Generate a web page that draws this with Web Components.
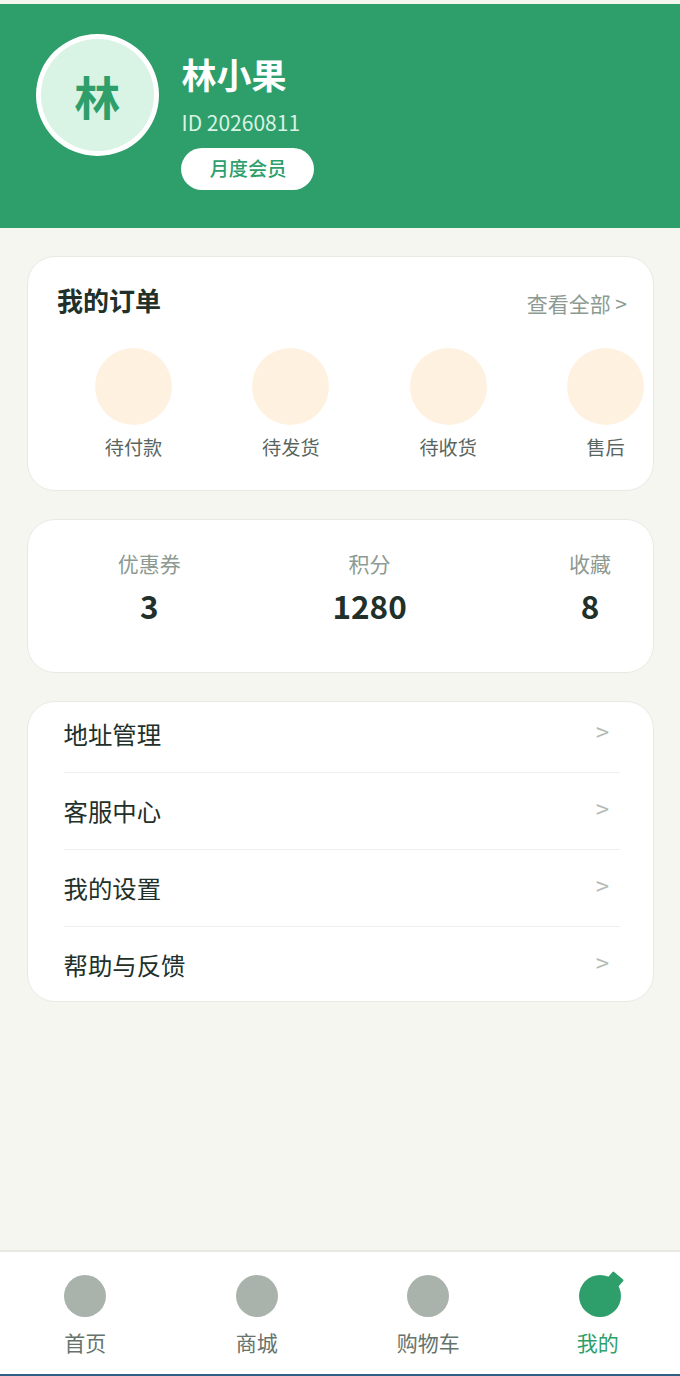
<!DOCTYPE html>
<html lang="zh-CN">
<head>
<meta charset="utf-8">
<title>我的</title>
<style>
    html, body { margin: 0; height: 100%; }
    body {
        background: #f6f6f1;
        font-family: "Noto Sans CJK SC", "Noto Sans", sans-serif;
        overflow: hidden;
    }
</style>
</head>
<body>
<profile-page>
    <profile-header name="林小果" uid="ID 20260811" badge="月度会员" avatar="林"></profile-header>
    <div slot="main">
        <order-card></order-card>
        <stats-card></stats-card>
        <menu-card></menu-card>
    </div>
    <tab-bar slot="tabs"></tab-bar>
</profile-page>

<script>
class ProfilePage extends HTMLElement {
    constructor() {
        super();
        this.attachShadow({ mode: "open" });
        this.shadowRoot.innerHTML = `
            <style>
                :host {
                    display: flex;
                    flex-direction: column;
                    height: 1376px;
                    padding-top: 4px;
                    box-sizing: border-box;
                }
                ::slotted([slot="main"]) {
                    display: flex;
                    flex-direction: column;
                    gap: 28px;
                    padding: 28px 26px 0 27px;
                    flex: 1;
                }
            </style>
            <slot></slot>
            <slot name="main"></slot>
            <slot name="tabs"></slot>
        `;
    }
}

class ProfileHeader extends HTMLElement {
    constructor() {
        super();
        this.attachShadow({ mode: "open" });
    }

    connectedCallback() {
        const a = n => this.getAttribute(n);
        this.shadowRoot.innerHTML = `
            <style>
                :host {
                    display: flex;
                    align-items: flex-start;
                    gap: 23px;
                    height: 224px;
                    box-sizing: border-box;
                    padding: 30px 36px 0;
                    background: #2e9f6b;
                }
                .avatar {
                    width: 122.5px;
                    height: 122px;
                    box-sizing: border-box;
                    border: 5px solid #fff;
                    border-radius: 50%;
                    background: #d9f3e4;
                    color: #2e9f6b;
                    font-size: 46px;
                    font-weight: 700;
                    display: flex;
                    align-items: center;
                    justify-content: center;
                }
                .info { display: flex; flex-direction: column; align-items: flex-start; }
                .name {
                    color: #fff;
                    font-size: 35px;
                    font-weight: 700;
                    line-height: 50px;
                    margin-top: 15px;
                }
                .uid {
                    color: #d9f3e4;
                    font-size: 21px;
                    line-height: 30px;
                    margin-top: 8px;
                }
                .badge {
                    margin-top: 11px;
                    margin-left: -1px;
                    width: 133px;
                    height: 42px;
                    border-radius: 21px;
                    background: #fff;
                    color: #2e9f6b;
                    font-size: 19.2px;
                    font-weight: 500;
                    line-height: 40px;
                    padding: 0 0 2px 2px;
                    box-sizing: border-box;
                    text-align: center;
                }
            </style>
            <div class="avatar">${a("avatar")}</div>
            <div class="info">
                <div class="name">${a("name")}</div>
                <div class="uid">${a("uid")}</div>
                <div class="badge">${a("badge")}</div>
            </div>
        `;
    }
}

const cardStyle = `
    :host {
        display: block;
        box-sizing: border-box;
        background: #fff;
        border: 1px solid #e9e9e4;
        border-radius: 28px;
    }
`;

class OrderCard extends HTMLElement {
    constructor() {
        super();
        this.attachShadow({ mode: "open" });
        const items = ["待付款", "待发货", "待收货", "售后"];
        this.shadowRoot.innerHTML = `
            <style>
                ${cardStyle}
                :host { height: 235px; padding: 24px 26px 0 29px; }
                .head { display: flex; justify-content: space-between; align-items: flex-start; height: 37px; }
                .title { font-size: 26px; font-weight: 700; line-height: 37px; color: #22302a; }
                .all { font-size: 21px; line-height: 30px; margin-top: 7px; color: #8d9a92; }
                .list {
                    display: grid;
                    grid-template-columns: repeat(4, 77px);
                    justify-content: space-between;
                    margin: 30px -17px 0 38px;
                }
                .item { display: flex; flex-direction: column; align-items: center; gap: 8px; }
                .dot { width: 77px; height: 77px; border-radius: 50%; background: #fff1e0; }
                .label { font-size: 19.2px; line-height: 28px; color: #59665f; white-space: nowrap; }
            </style>
            <div class="head">
                <div class="title">我的订单</div>
                <div class="all">查看全部 &gt;</div>
            </div>
            <div class="list">
                ${items.map(t => `<div class="item"><div class="dot"></div><div class="label">${t}</div></div>`).join("")}
            </div>
        `;
    }
}

class StatsCard extends HTMLElement {
    constructor() {
        super();
        this.attachShadow({ mode: "open" });
        const stats = [["优惠券", "3"], ["积分", "1280"], ["收藏", "8"]];
        this.shadowRoot.innerHTML = `
            <style>
                ${cardStyle}
                :host {
                    height: 154px;
                    padding: 28px 0 0 11px;
                    display: grid;
                    grid-template-columns: repeat(3, 220.4px);
                    align-items: start;
                }
                .stat { display: flex; flex-direction: column; align-items: center; }
                .label { font-size: 21px; line-height: 30px; color: #8d9a92; }
                .value { font-size: 31.5px; font-weight: 700; line-height: 46px; margin-top: 4px; color: #22302a; }
            </style>
            ${stats.map(s => `<div class="stat"><div class="label">${s[0]}</div><div class="value">${s[1]}</div></div>`).join("")}
        `;
    }
}

class MenuCard extends HTMLElement {
    constructor() {
        super();
        this.attachShadow({ mode: "open" });
        const rows = ["地址管理", "客服中心", "我的设置", "帮助与反馈"];
        this.shadowRoot.innerHTML = `
            <style>
                ${cardStyle}
                :host { height: 301px; padding: 0 33px 0 36px; }
                .row {
                    display: flex;
                    justify-content: space-between;
                    height: 77px;
                    box-sizing: border-box;
                    padding-top: 14px;
                    border-bottom: 1px solid #eeefea;
                }
                .row:first-of-type { height: 71px; padding-top: 14px; }
                .row + .row { padding-top: 20px; }
                .row:last-of-type { border-bottom: 0; height: 70px; }
                .text { font-size: 24.4px; line-height: 35px; color: #22302a; margin-left: -0.5px; }
                .arrow { font-size: 24px; line-height: 32px; color: #b4bbb6; margin: -1px 11px 0 0; }
            </style>
            ${rows.map(t => `<div class="row"><span class="text">${t}</span><span class="arrow">&gt;</span></div>`).join("")}
        `;
    }
}

class TabBar extends HTMLElement {
    constructor() {
        super();
        this.attachShadow({ mode: "open" });
        const tabs = ["首页", "商城", "购物车", "我的"];
        this.shadowRoot.innerHTML = `
            <style>
                :host {
                    display: grid;
                    grid-template-columns: repeat(4, 171.5px);
                    height: 126px;
                    box-sizing: border-box;
                    background: #fff;
                    border-top: 2px solid #e8e9e3;
                    border-bottom: 2px solid #2f5f86;
                    padding: 23px 0 0;
                }
                .tab { display: flex; flex-direction: column; align-items: center; gap: 10px; color: #66736c; margin: 0 0.5px 0 -0.5px; }
                .icon { position: relative; width: 42px; height: 42px; border-radius: 50%; background: #a9b2ab; }
                .label { font-size: 21px; line-height: 30px; }
                .on { color: #2e9f6b; }
                .on .label { margin-left: -4px; }
                .on .icon { background: #2e9f6b; }
                .on .icon::after {
                    content: "";
                    position: absolute;
                    top: -1px;
                    right: 0;
                    width: 14px;
                    height: 14px;
                    background: #2e9f6b;
                    border-radius: 1px;
                    transform: rotate(40deg);
                }
            </style>
            ${tabs.map((t, i) => `<div class="tab ${i === 3 ? "on" : ""}"><div class="icon"></div><div class="label">${t}</div></div>`).join("")}
        `;
    }
}

customElements.define("profile-page", ProfilePage);
customElements.define("profile-header", ProfileHeader);
customElements.define("order-card", OrderCard);
customElements.define("stats-card", StatsCard);
customElements.define("menu-card", MenuCard);
customElements.define("tab-bar", TabBar);
</script>
</body>
</html>
